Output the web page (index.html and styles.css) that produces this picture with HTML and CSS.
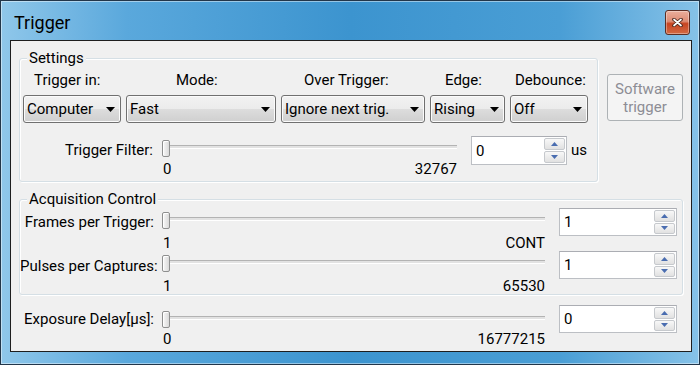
FILE: index.html
```
<!DOCTYPE html>
<html lang="en">
<head>
    <meta charset="UTF-8">
    <title>Trigger</title>
    <link rel="stylesheet" href="styles.css">
</head>
<body>
    <div class="window">
        <div class="titlebar">
            <span class="title">Trigger</span>
            <span class="close">
                <svg width="11" height="9" viewBox="0 0 11 9">
                    <path d="M2 1.5 L9 7.5 M9 1.5 L2 7.5" stroke="#4a241a" stroke-width="3.6" stroke-linecap="round"/>
                    <path d="M2 1.5 L9 7.5 M9 1.5 L2 7.5" stroke="#fff" stroke-width="1.7" stroke-linecap="round"/>
                </svg>
            </span>
        </div>

        <div class="client">
            <div class="top-row">
                <div class="group settings">
                    <div class="group-title">Settings</div>

                    <div class="combo-grid">
                        <span class="col-label l1">Trigger in:</span>
                        <span class="col-label l2">Mode:</span>
                        <span class="col-label l3">Over Trigger:</span>
                        <span class="col-label l4">Edge:</span>
                        <span class="col-label l5">Debounce:</span>

                        <div class="combo"><span>Computer</span><svg class="arrow" width="9" height="5" viewBox="0 0 9 5"><polygon points="0,0 9,0 4.5,5"/></svg></div>
                        <div class="combo"><span>Fast</span><svg class="arrow" width="9" height="5" viewBox="0 0 9 5"><polygon points="0,0 9,0 4.5,5"/></svg></div>
                        <div class="combo"><span>Ignore next trig.</span><svg class="arrow" width="9" height="5" viewBox="0 0 9 5"><polygon points="0,0 9,0 4.5,5"/></svg></div>
                        <div class="combo"><span>Rising</span><svg class="arrow" width="9" height="5" viewBox="0 0 9 5"><polygon points="0,0 9,0 4.5,5"/></svg></div>
                        <div class="combo"><span>Off</span><svg class="arrow" width="9" height="5" viewBox="0 0 9 5"><polygon points="0,0 9,0 4.5,5"/></svg></div>
                    </div>

                    <div class="slider-row filter-row">
                        <span class="row-label">Trigger Filter:</span>
                        <div class="slider">
                            <div class="track"><span class="thumb"></span></div>
                            <div class="scale"><span>0</span><span>32767</span></div>
                        </div>
                        <div class="spin">
                            <span class="spin-value">0</span>
                            <div class="spin-btns">
                                <span class="spin-btn"><svg width="7" height="4" viewBox="0 0 7 4"><polygon points="0,4 7,4 3.5,0"/></svg></span>
                                <span class="spin-btn"><svg width="7" height="4" viewBox="0 0 7 4"><polygon points="0,0 7,0 3.5,4"/></svg></span>
                            </div>
                        </div>
                        <span class="unit">us</span>
                    </div>
                </div>

                <button class="soft-btn" disabled>Software<br>trigger</button>
            </div>

            <div class="group acq">
                <div class="group-title">Acquisition Control</div>

                <div class="slider-row wide frames-row">
                    <span class="row-label">Frames per Trigger:</span>
                    <div class="slider">
                        <div class="track"><span class="thumb"></span></div>
                        <div class="scale"><span>1</span><span>CONT</span></div>
                    </div>
                    <div class="spin">
                        <span class="spin-value">1</span>
                        <div class="spin-btns">
                            <span class="spin-btn"><svg width="7" height="4" viewBox="0 0 7 4"><polygon points="0,4 7,4 3.5,0"/></svg></span>
                            <span class="spin-btn"><svg width="7" height="4" viewBox="0 0 7 4"><polygon points="0,0 7,0 3.5,4"/></svg></span>
                        </div>
                    </div>
                </div>

                <div class="slider-row wide pulses-row">
                    <span class="row-label">Pulses per Captures:</span>
                    <div class="slider">
                        <div class="track"><span class="thumb"></span></div>
                        <div class="scale"><span>1</span><span>65530</span></div>
                    </div>
                    <div class="spin">
                        <span class="spin-value">1</span>
                        <div class="spin-btns">
                            <span class="spin-btn"><svg width="7" height="4" viewBox="0 0 7 4"><polygon points="0,4 7,4 3.5,0"/></svg></span>
                            <span class="spin-btn"><svg width="7" height="4" viewBox="0 0 7 4"><polygon points="0,0 7,0 3.5,4"/></svg></span>
                        </div>
                    </div>
                </div>
            </div>

            <div class="slider-row wide exposure-row">
                <span class="row-label">Exposure Delay[µs]:</span>
                <div class="slider">
                    <div class="track"><span class="thumb"></span></div>
                    <div class="scale"><span>0</span><span>16777215</span></div>
                </div>
                <div class="spin">
                    <span class="spin-value">0</span>
                    <div class="spin-btns">
                        <span class="spin-btn"><svg width="7" height="4" viewBox="0 0 7 4"><polygon points="0,4 7,4 3.5,0"/></svg></span>
                        <span class="spin-btn"><svg width="7" height="4" viewBox="0 0 7 4"><polygon points="0,0 7,0 3.5,4"/></svg></span>
                    </div>
                </div>
            </div>
        </div>
    </div>
</body>
</html>
```

FILE: styles.css
```
body {
    margin: 0;
    background: #fff;
    font-family: Roboto, "Liberation Sans", sans-serif;
    font-size: 15px;
    color: #000;
}
.window {
    width: 700px;
    height: 365px;
    box-sizing: border-box;
    border: 1px solid #22364a;
    padding: 0 7px 0 9px;
    background: linear-gradient(90deg, #8fc7ea 0%, #5aa8dc 18%, #3c94cf 50%, #4a9ed5 80%, #86c2e8 100%);
    box-shadow: inset 0 0 0 1px rgba(255,255,255,0.45);
}
.titlebar {
    height: 39px;
    display: flex;
    justify-content: space-between;
    align-items: flex-start;
}
.title {
    margin: 10px 0 0 4px;
    font-size: 18px;
    line-height: 24px;
}
.close {
    width: 25px;
    height: 25px;
    margin: 9px 2px 0 0;
    box-sizing: border-box;
    border: 1px solid #5b2e24;
    border-radius: 3px;
    background: linear-gradient(#eaae9c, #dd8c74 45%, #c74422 55%, #d36a44);
    box-shadow: inset 0 0 0 1px rgba(255,255,255,0.35);
    display: flex;
    align-items: center;
    justify-content: center;
}
.client {
    height: 312px;
    box-sizing: border-box;
    border: 1px solid #1e1e1e;
    background: #f0f0f0;
}

/* group boxes */
.top-row {
    display: flex;
    align-items: flex-start;
    margin: 17px 0 0 8px;
}
.group {
    box-sizing: border-box;
    border: 1px solid #d5dfe5;
    border-radius: 3px;
    box-shadow: inset 1px 1px 0 #fff, 1px 1px 0 #fff;
}
.group-title {
    width: fit-content;
    margin: -9px 0 0 7px;
    padding: 0 2px;
    line-height: 16px;
    background: #f0f0f0;
}
.settings {
    width: 579px;
    padding-bottom: 4px;
}
.acq {
    width: 664px;
    margin: 17px 0 0 8px;
}

/* combos */
.combo-grid {
    display: grid;
    grid-template-columns: 98px 150px 144px 75px 78px;
    column-gap: 5px;
    row-gap: 7px;
    margin: 6px 0 0 3px;
}
.col-label { line-height: 16px; }
.l1 { padding-left: 11px; }
.l2 { padding-left: 50px; }
.l3 { padding-left: 23px; }
.l4 { padding-left: 15px; }
.l5 { padding-left: 5px; }
.combo {
    height: 28px;
    box-sizing: border-box;
    border: 1px solid #707070;
    border-radius: 3px;
    background: linear-gradient(#f2f2f2, #ebebeb 50%, #dddddd 50%, #cfcfcf);
    box-shadow: inset 0 0 0 1px #fbfbfb;
    display: flex;
    align-items: center;
    justify-content: space-between;
    padding: 0 5px 0 3px;
    white-space: nowrap;
}
.arrow { fill: #000; flex: none; }

/* slider rows */
.slider-row {
    display: flex;
    align-items: flex-start;
}
.row-label {
    flex: none;
    width: 133px;
    text-align: right;
    line-height: 16px;
    margin-top: 6px;
    white-space: nowrap;
}
.slider {
    flex: none;
    margin: 4px 0 0 9px;
}
.track {
    height: 18px;
    display: flex;
    background: linear-gradient(to bottom, transparent 5px, #b3b3b3 5px, #b3b3b3 6px, #e2e2e2 6px, #e2e2e2 8px, #fff 8px, #fff 9px, transparent 9px);
}
.thumb {
    width: 8px;
    height: 17px;
    box-sizing: border-box;
    border: 1px solid #8e8f8f;
    border-radius: 2px;
    background: linear-gradient(90deg, #f8f8f8, #dadada);
    box-shadow: inset 1px 1px 0 #fff;
}
.scale {
    display: flex;
    justify-content: space-between;
    line-height: 16px;
    margin-top: 3px;
    padding-left: 1px;
}
.spin {
    flex: none;
    display: flex;
    align-items: center;
    box-sizing: border-box;
    margin-left: 14px;
    height: 29px;
    border: 1px solid #bcbfc4;
    border-top-color: #abadb3;
    background: #fff;
}
.spin-value {
    flex: 1;
    padding-left: 4px;
    line-height: 16px;
}
.spin-btns {
    align-self: stretch;
    display: flex;
    flex-direction: column;
    gap: 1px;
    width: 21px;
    margin: 1px 1px 1px 0;
}
.spin-btn {
    flex: 1;
    display: flex;
    align-items: center;
    justify-content: center;
    border: 1px solid #c6c9cd;
    border-radius: 2px;
    background: linear-gradient(#f8f8f8, #e1e1e1);
}
.spin-btn svg { fill: #4a6db0; }
.unit {
    margin: 6px 0 0 4px;
    line-height: 16px;
}

.filter-row { margin-top: 13px; }
.filter-row .slider { width: 295px; }
.filter-row .spin { width: 96px; }

.wide .row-label { width: 134px; }
.wide .slider { width: 383px; margin-left: 8px; }
.wide .spin { width: 118px; height: 28px; }
.wide .scale { margin-top: 5px; }
.frames-row { margin-top: 1px; }
.pulses-row .row-label { margin-top: 7px; }
.exposure-row { margin: 10px 0 0 9px; }
.exposure-row .slider { margin-top: 6px; }
.exposure-row .scale { margin-top: 2px; }

.soft-btn {
    flex: none;
    width: 76px;
    height: 47px;
    margin: 16px 0 0 9px;
    padding: 0;
    font: inherit;
    line-height: 18px;
    color: #8d8d95;
    background: #f4f4f4;
    border: 1px solid #adb2b5;
    border-radius: 3px;
}
```
